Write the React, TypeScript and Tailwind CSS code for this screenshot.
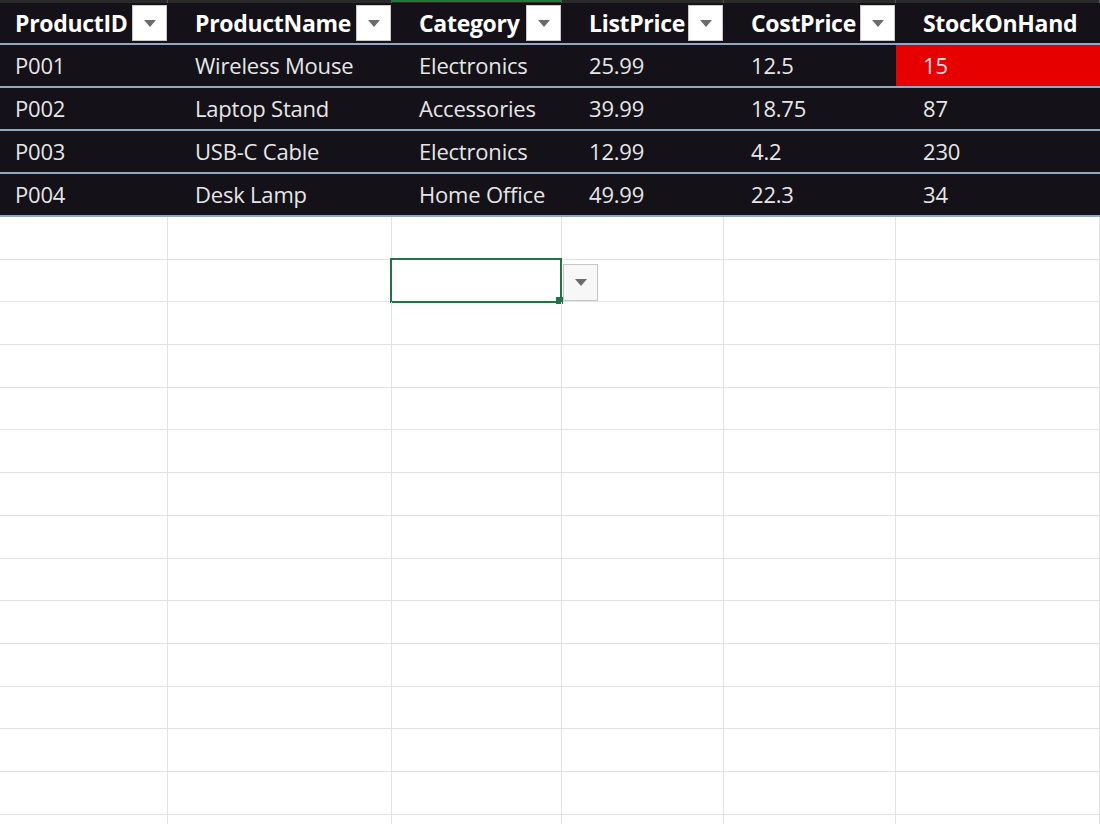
import React from "react";

const cols = [168, 224, 170, 162, 172, 204];
const headers = ["ProductID", "ProductName", "Category", "ListPrice", "CostPrice", "StockOnHand"];
const rows = [
  ["P001", "Wireless Mouse", "Electronics", "25.99", "12.5", "15"],
  ["P002", "Laptop Stand", "Accessories", "39.99", "18.75", "87"],
  ["P003", "USB-C Cable", "Electronics", "12.99", "4.2", "230"],
  ["P004", "Desk Lamp", "Home Office", "49.99", "22.3", "34"],
];

function Tri() {
  return (
    <svg width="12" height="7" viewBox="0 0 12 7">
      <path d="M0 0 L12 0 L6 7 Z" fill="#6b6b6b" />
    </svg>
  );
}

function FilterBtn() {
  return (
    <div className="w-[35px] h-[36px] bg-white border border-[#c8c8c8] flex items-center justify-center shrink-0">
      <Tri />
    </div>
  );
}

export default function App() {
  const font = { fontFamily: '"Open Sans", "Noto Sans", sans-serif' };
  return (
    <div className="w-[1100px] h-[824px] overflow-hidden bg-white" style={font}>
      {/* top strip */}
      <div className="flex h-[3px] bg-[#2a2a2a]">
        {cols.map((w, i) => (
          <div key={i} className="h-full border-r border-[#555] shrink-0" style={{ width: w }}>
            {i === 2 && <div className="h-[2px] bg-[#1e7b3c]" />}
          </div>
        ))}
      </div>
      {/* header */}
      <div className="flex h-[42px] bg-[#141118] border-b-2 border-[#8fa8c6]">
        {headers.map((h, i) => (
          <div
            key={i}
            className={`shrink-0 flex items-center justify-between pr-[1px] overflow-hidden ${i === 0 ? "pl-[15px]" : "pl-[27px]"}`}
            style={{ width: cols[i] }}
          >
            <span className="text-white font-bold text-[23px] tracking-[-0.3px] whitespace-nowrap">{h}</span>
            {i < 5 && <FilterBtn />}
          </div>
        ))}
      </div>
      {/* data rows */}
      {rows.map((r, ri) => (
        <div key={ri} className="flex h-[43px] bg-[#141118] border-b-2 border-[#8fa8c6]">
          {r.map((c, i) => (
            <div
              key={i}
              className={`shrink-0 flex items-center ${i === 0 ? "pl-[15px]" : "pl-[27px]"} ${
                ri === 0 && i === 5 ? "bg-[#e60000] text-[#ffe0e0]" : "text-[#e6e6e6]"
              }`}
              style={{ width: cols[i] }}
            >
              <span className="text-[22px] tracking-[-0.2px] whitespace-nowrap">{c}</span>
            </div>
          ))}
        </div>
      ))}
      {/* empty grid */}
      {Array.from({ length: 15 }).map((_, ri) => (
        <div key={ri} className="flex h-[42.7px] border-b border-[#e2e2e2]">
          {cols.map((w, i) => (
            <div key={i} className="shrink-0 border-r border-[#e2e2e2] relative" style={{ width: w }}>
              {ri === 1 && i === 2 && (
                <>
                  <div className="absolute left-[-2px] top-[-2px] right-[-1px] bottom-[-2px] border-2 border-[#217346]" />
                  <div className="absolute right-[-2px] bottom-[-3px] w-[7px] h-[7px] bg-[#217346]" />
                  <div className="absolute left-[171px] top-[4px] w-[35px] h-[37px] bg-[#f7f7f7] border border-[#c6c6c6] flex items-center justify-center">
                    <Tri />
                  </div>
                </>
              )}
            </div>
          ))}
        </div>
      ))}
    </div>
  );
}
